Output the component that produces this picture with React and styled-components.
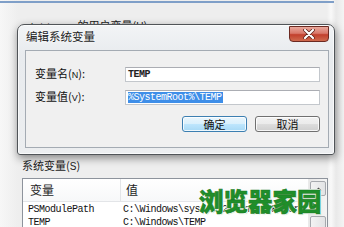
import styled, { createGlobalStyle } from "styled-components";

const Global = createGlobalStyle`
  html, body { margin: 0; padding: 0; }
  body {
    width: 344px;
    height: 227px;
    overflow: hidden;
    background: #f0f0f0;
    font-family: "Noto Sans CJK SC", "DejaVu Sans", sans-serif;
  }
`;

const Screen = styled.div`
  position: relative;
  width: 344px;
  height: 227px;
  overflow: hidden;
  background: linear-gradient(to right, #f7f7f7 0, #eeeeee 18px, #eeeeee 327px, #f9f9f9 331px, #e9e9e9 336px, #f4f4f4 344px);
`;

const TopLine = styled.div`
  margin-top: 1px;
  height: 2px;
  width: 334px;
  background: #7f9fc8;
`;

const Body = styled.div`
  padding: 16px 0 0 22px;
`;

const GroupLabel = styled.div`
  font-size: 11px;
  line-height: 12px;
  color: #1a1a1a;
  margin-top: ${(p) => p.$top || 0}px;
  white-space: nowrap;
`;

const Latin = styled.span`
  font-family: "Liberation Sans", sans-serif;
  font-size: ${(p) => p.$size || 10}px;
`;

const ListBox = styled.div`
  margin-top: 5px;
  width: 304px;
  height: 60px;
  border: 1px solid #8d939c;
  background: #fff;
  display: flex;
`;

const ListContent = styled.div`
  flex: 1;
  min-width: 0;
  overflow: hidden;
  display: flex;
  flex-direction: column;
`;

const HeaderRow = styled.div`
  display: flex;
  height: 22px;
  border-bottom: 1px solid #e3e5e8;
  background: linear-gradient(#ffffff, #f7f8f9);
`;

const HeaderCell = styled.div`
  width: ${(p) => (p.$w ? `${p.$w}px` : "auto")};
  flex: ${(p) => (p.$w ? "none" : 1)};
  padding-left: ${(p) => p.$pad}px;
  font-size: 12px;
  line-height: 22px;
  color: #1e1e1e;
  border-right: ${(p) => (p.$w ? "1px solid #e3e5e8" : "none")};
`;

const Row = styled.div`
  display: flex;
  height: 13px;
  margin-top: ${(p) => p.$top || 0}px;
`;

const Cell = styled.div`
  width: ${(p) => (p.$w ? `${p.$w}px` : "auto")};
  flex: ${(p) => (p.$w ? "none" : 1)};
  min-width: 0;
  padding-left: ${(p) => p.$pad}px;
  font-family: "Liberation Mono", monospace;
  font-size: 10px;
  letter-spacing: -0.5px;
  line-height: 13px;
  color: #111;
  white-space: nowrap;
  overflow: hidden;
`;

const ScrollBar = styled.div`
  width: 16px;
  flex: none;
  background: linear-gradient(to right, #e8e8e8, #f4f4f4);
  border-left: 1px solid #eaeaea;
  display: flex;
  flex-direction: column;
  gap: 20px;
  padding: 2px 1px 0 1px;
`;

const ScrollPart = styled.div`
  height: ${(p) => p.$h}px;
  border: 1px solid #a6a9ae;
  border-radius: 2px;
  background: linear-gradient(to right, #f3f3f3, #e2e3e5);
  display: flex;
  align-items: center;
  justify-content: center;
`;

const Dialog = styled.div`
  position: absolute;
  left: 17px;
  top: 24px;
  width: 318px;
  height: 131px;
  box-sizing: border-box;
  border: 1px solid #505458;
  border-radius: 7px 7px 3px 3px;
  background: linear-gradient(#f2f4f6, #e8ebee 30px, #eceef0);
  box-shadow: 1px 3px 8px rgba(0, 0, 0, 0.45), inset 0 0 0 1px rgba(255, 255, 255, 0.7);
  display: flex;
  flex-direction: column;
  padding: 0 5px 6px 7px;
`;

const TitleBar = styled.div`
  height: 25px;
  flex: none;
  display: flex;
  align-items: flex-start;
  justify-content: space-between;
`;

const Title = styled.div`
  padding: 4px 0 0 1px;
  font-size: 11.5px;
  line-height: 14px;
  color: #1c1c1c;
  text-shadow: 0 0 4px #fff;
`;

const CloseButton = styled.div`
  margin-top: 1px;
  width: 40px;
  height: 16px;
  box-sizing: border-box;
  border: 1px solid #6b2a22;
  border-radius: 0 0 4px 4px;
  background: linear-gradient(#e9a89c 0, #d9786a 45%, #c2402d 55%, #cf6a4e 100%);
  display: flex;
  align-items: center;
  justify-content: center;
`;

const Panel = styled.div`
  flex: 1;
  border: 1px solid #a4abb3;
  background: #f0f0f0;
  padding: 16px 8px 0 9px;
  display: flex;
  flex-direction: column;
`;

const Field = styled.div`
  display: flex;
  align-items: center;
  height: 15px;
  margin-top: ${(p) => p.$top || 0}px;
`;

const FieldLabel = styled.div`
  width: 90px;
  font-size: 11px;
  line-height: 15px;
  color: #111;
  white-space: nowrap;
`;

const Input = styled.div`
  width: 195px;
  height: 15px;
  box-sizing: border-box;
  border: 1px solid #c3c7cc;
  border-top-color: #abadb3;
  background: #fff;
  padding: 0 0 0 2px;
  display: flex;
  align-items: center;
  font-family: "Liberation Mono", monospace;
  font-size: 10px;
  letter-spacing: -0.5px;
  font-weight: 700;
  color: #222;
`;

const Selected = styled.span`
  background: #3e8ee8;
  color: #fff;
  font-weight: 400;
  line-height: 11px;
  padding-right: 1px;
`;

const Buttons = styled.div`
  margin-top: 11px;
  display: flex;
  justify-content: flex-end;
  gap: 8px;
`;

const Button = styled.div`
  width: 65px;
  height: 16px;
  box-sizing: border-box;
  border: 1px solid ${(p) => (p.$default ? "#3c7fb1" : "#707070")};
  border-radius: 3px;
  background: ${(p) =>
    p.$default
      ? "linear-gradient(#eaf6fd 0, #d9f0fc 50%, #bee6fd 51%, #a7d9f5 100%)"
      : "linear-gradient(#f2f2f2 0, #ebebeb 50%, #dddddd 51%, #cfcfcf 100%)"};
  box-shadow: inset 0 0 0 1px rgba(255, 255, 255, 0.8);
  font-size: 11px;
  line-height: 14px;
  text-align: center;
  color: #111;
`;

const Watermark = styled.div`
  position: absolute;
  left: 199px;
  top: 186px;
  font-size: 24.5px;
  font-weight: 900;
  line-height: 30px;
  color: #1f8e2a;
  white-space: nowrap;
  -webkit-text-stroke: 0.6px #1a7d24;
  text-shadow: 1px 0 0 #fff, -1px 0 0 #fff, 0 1px 0 #fff, 0 -1px 0 #fff, 1px 1px 1px #bfe6c2;
`;

function CloseIcon() {
  return (
    <svg width="12" height="10" viewBox="0 0 12 10">
      <path d="M2 1 L10 9 M10 1 L2 9" stroke="#5a1d14" strokeWidth="3.6" strokeLinecap="round" />
      <path d="M2 1 L10 9 M10 1 L2 9" stroke="#ffffff" strokeWidth="2.2" strokeLinecap="round" />
    </svg>
  );
}

function UpArrow() {
  return (
    <svg width="7" height="4" viewBox="0 0 7 4">
      <path d="M0.5 3.5 L3.5 0.5 L6.5 3.5 Z" fill="#4d4d4d" />
    </svg>
  );
}

const rows = [
  ["PSModulePath", "C:\\Windows\\system32\\WindowsPowerShell\\v1.0\\Modules\\"],
  ["TEMP", "C:\\Windows\\TEMP"],
];

export default function App() {
  return (
    <Screen>
      <Global />
      <TopLine />
      <Body>
        <GroupLabel>
          <Latin $size={9}>Administrator</Latin> 的用户变量(<Latin>U</Latin>)
        </GroupLabel>
        <GroupLabel $top={126}>
          系统变量(<Latin>S</Latin>)
        </GroupLabel>
        <ListBox>
          <ListContent>
            <HeaderRow>
              <HeaderCell $w={90} $pad={7}>变量</HeaderCell>
              <HeaderCell $pad={5}>值</HeaderCell>
            </HeaderRow>
            {rows.map(([name, value], i) => (
              <Row key={name} $top={i === 0 ? 1 : 0}>
                <Cell $w={91} $pad={5}>{name}</Cell>
                <Cell $pad={4}>{value}</Cell>
              </Row>
            ))}
          </ListContent>
          <ScrollBar>
            <ScrollPart $h={13}>
              <UpArrow />
            </ScrollPart>
            <ScrollPart $h={20} />
          </ScrollBar>
        </ListBox>
      </Body>

      <Dialog>
        <TitleBar>
          <Title>编辑系统变量</Title>
          <CloseButton>
            <CloseIcon />
          </CloseButton>
        </TitleBar>
        <Panel>
          <Field>
            <FieldLabel>
              变量名(<Latin $size={9}>N</Latin>):
            </FieldLabel>
            <Input>TEMP</Input>
          </Field>
          <Field $top={8}>
            <FieldLabel>
              变量值(<Latin $size={9}>V</Latin>):
            </FieldLabel>
            <Input>
              <Selected>%SystemRoot%\TEMP</Selected>
            </Input>
          </Field>
          <Buttons>
            <Button $default>确定</Button>
            <Button>取消</Button>
          </Buttons>
        </Panel>
      </Dialog>

      <Watermark>浏览器家园</Watermark>
    </Screen>
  );
}
